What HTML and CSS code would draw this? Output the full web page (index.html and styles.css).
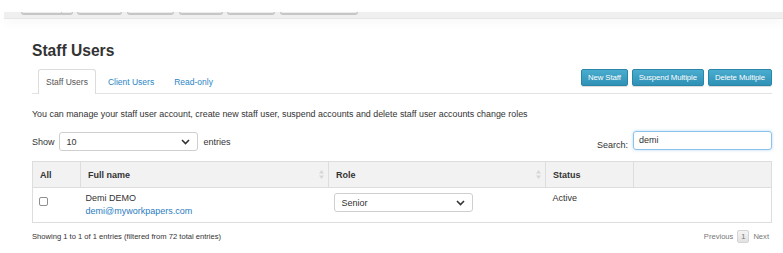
FILE: index.html
```html
<!DOCTYPE html>
<html lang="en">
<head>
    <meta charset="UTF-8">
    <meta name="viewport" content="width=device-width, initial-scale=1.0">
    <title>Staff Users</title>
    <link rel="stylesheet" href="styles.css">
</head>
<body>
    <div class="topnav">
        <div class="navbtns">
            <span class="navbtn split"><span class="navbtn-main"></span><span class="navbtn-caret"></span></span>
            <span class="navbtn w45"></span>
            <span class="navbtn w47"></span>
            <span class="navbtn w44"></span>
            <span class="navbtn w48"></span>
            <span class="navbtn w78"></span>
        </div>
    </div>

    <div class="page">
        <h1 class="title">Staff Users</h1>

        <div class="tabbar">
            <ul class="tabs">
                <li class="active">Staff Users</li>
                <li>Client Users</li>
                <li>Read-only</li>
            </ul>
            <div class="actions">
                <button class="btn">New Staff</button>
                <button class="btn">Suspend Multiple</button>
                <button class="btn">Delete Multiple</button>
            </div>
        </div>

        <p class="intro">You can manage your staff user account, create new staff user, suspend accounts and delete staff user accounts change roles</p>

        <div class="controls">
            <div class="length">
                <label>Show</label>
                <div class="select length-select">
                    <span>10</span>
                    <svg width="9" height="6" viewBox="0 0 9 6"><polyline points="1,1 4.5,4.5 8,1" fill="none" stroke="#333" stroke-width="1.6"/></svg>
                </div>
                <label>entries</label>
            </div>
            <div class="search">
                <label>Search:</label>
                <div class="search-input">demi</div>
            </div>
        </div>

        <table class="grid">
            <colgroup>
                <col class="c-all">
                <col class="c-name">
                <col class="c-role">
                <col class="c-status">
                <col>
            </colgroup>
            <thead>
                <tr>
                    <th>All</th>
                    <th>Full name<svg class="sort" width="5" height="9" viewBox="0 0 5 9"><polygon points="2.5,0 5,3.5 0,3.5" fill="#d6d6d6"/><polygon points="2.5,9 5,5.5 0,5.5" fill="#d6d6d6"/></svg></th>
                    <th>Role<svg class="sort" width="5" height="9" viewBox="0 0 5 9"><polygon points="2.5,0 5,3.5 0,3.5" fill="#d6d6d6"/><polygon points="2.5,9 5,5.5 0,5.5" fill="#d6d6d6"/></svg></th>
                    <th>Status</th>
                    <th></th>
                </tr>
            </thead>
            <tbody>
                <tr>
                    <td><span class="checkbox"></span></td>
                    <td>
                        <div class="name">Demi DEMO</div>
                        <a class="email">demi@myworkpapers.com</a>
                    </td>
                    <td class="role">
                        <div class="select role-select">
                            <span>Senior</span>
                            <svg width="9" height="6" viewBox="0 0 9 6"><polyline points="1,1 4.5,4.5 8,1" fill="none" stroke="#333" stroke-width="1.6"/></svg>
                        </div>
                    </td>
                    <td class="status">Active</td>
                    <td></td>
                </tr>
            </tbody>
        </table>

        <div class="footer">
            <span class="info">Showing 1 to 1 of 1 entries (filtered from 72 total entries)</span>
            <div class="pager">
                <span>Previous</span>
                <span class="current">1</span>
                <span>Next</span>
            </div>
        </div>
    </div>
</body>
</html>
```

FILE: styles.css
```css
body {
    font-family: "Liberation Sans", Arial, sans-serif;
    font-size: 9px;
    color: #333;
    background-color: #fff;
    margin: 0;
    padding: 0;
}
.topnav {
    margin: 12px 0 0 4px;
    height: 6px;
    background-color: #efefef;
    border-bottom: 1px solid #e6e6e6;
    box-shadow: 0 4px 10px rgba(0, 0, 0, 0.04);
}
.navbtns {
    display: flex;
    padding-left: 17px;
}
.navbtn {
    display: block;
    box-sizing: border-box;
    height: 3px;
    border: 1px solid #c6c6c6;
    border-top: 0;
    border-bottom-width: 2px;
    border-radius: 0 0 3px 3px;
    background-color: #ececec;
    margin-right: 4px;
}
.navbtn.split {
    display: flex;
    width: 52px;
    border: 0;
    background: none;
}
.navbtn-main,
.navbtn-caret {
    box-sizing: border-box;
    height: 3px;
    border: 1px solid #c6c6c6;
    border-top: 0;
    border-bottom-width: 2px;
    background-color: #ececec;
}
.navbtn-main {
    width: 41px;
    border-radius: 0 0 0 3px;
}
.navbtn-caret {
    width: 11px;
    border-left: 0;
    border-radius: 0 0 3px 0;
}
.w45 { width: 45px; margin-right: 5px; }
.w47 { width: 47px; margin-right: 5px; }
.w44 { width: 44px; }
.w48 { width: 48px; margin-right: 5px; }
.w78 { width: 78px; }
.page {
    width: 740px;
    margin-left: 32px;
}
.title {
    font-size: 15.6px;
    font-weight: bold;
    margin: 0;
    padding-top: 22px;
    height: 28px;
    line-height: 20px;
}
.tabbar {
    display: flex;
    justify-content: space-between;
    align-items: flex-start;
    border-bottom: 1px solid #e2e2e2;
    height: 24px;
}
.tabs {
    list-style-type: none;
    margin: 0;
    padding: 0 0 0 6px;
    display: flex;
}
.tabs li {
    height: 24px;
    line-height: 24px;
    padding: 0 7px;
    margin-right: 4px;
    color: #2a86c6;
    border: 1px solid transparent;
    border-bottom: 0;
    border-radius: 3px 3px 0 0;
    box-sizing: border-box;
    font-size: 8.5px;
}
.tabs li.active {
    color: #555;
    background-color: #fff;
    border-color: #dcdcdc;
    height: 25px;
}
.actions {
    display: flex;
}
.btn {
    font-family: "Liberation Sans", Arial, sans-serif;
    font-size: 7.8px;
    color: #fff;
    height: 17px;
    padding: 0 6px;
    border: 1px solid #2a86a8;
    border-radius: 2px;
    background: linear-gradient(#4aacce, #2f91b5);
    box-shadow: 0 1px 1px rgba(0, 0, 0, 0.15);
    letter-spacing: -0.1px;
    margin-left: 4px;
}
.btn:first-child {
    margin-left: 0;
}
.intro {
    margin: 14px 0 0;
    line-height: 12px;
    font-size: 8.9px;
}
.controls {
    display: flex;
    justify-content: space-between;
    align-items: center;
    margin-top: 12px;
    height: 19px;
}
.length,
.search {
    display: flex;
    align-items: center;
}
.length label:first-child {
    margin-right: 4px;
}
.length label:last-child {
    margin-left: 6px;
}
.select {
    display: flex;
    justify-content: space-between;
    align-items: center;
    box-sizing: border-box;
    border: 1px solid #cfcfcf;
    border-radius: 3px;
    background-color: #fff;
    padding: 0 7px;
}
.length-select {
    width: 139px;
    height: 19px;
}
.search {
    margin-top: 6px;
}
.search label {
    margin-right: 5px;
}
.search-input {
    box-sizing: border-box;
    width: 139px;
    height: 19px;
    line-height: 16px;
    padding: 0 5px;
    border: 1px solid #8cc1ea;
    border-radius: 3px;
    box-shadow: 0 0 3px rgba(102, 175, 233, 0.5);
    margin-top: -8px;
}
.grid {
    width: 740px;
    margin-top: 10px;
    border-collapse: collapse;
    border: 1px solid #ddd;
    table-layout: fixed;
}
.c-all { width: 48px; }
.c-name { width: 248px; }
.c-role { width: 217px; }
.c-status { width: 88px; }
.grid th {
    background-color: #f2f2f2;
    text-align: left;
    font-weight: bold;
    height: 25px;
    padding: 0 7px;
    border-left: 1px solid #ddd;
    border-bottom: 1px solid #ddd;
    position: relative;
}
.grid th:first-child {
    border-left: 0;
}
.grid td {
    vertical-align: top;
    padding: 5px 5px 4px;
    height: 25px;
}
.sort {
    position: absolute;
    right: 4px;
    top: 8px;
}
.checkbox {
    display: block;
    width: 7px;
    height: 7px;
    border: 1px solid #8f8f8f;
    border-radius: 2px;
    margin: 4px 0 0 1px;
}
.name {
    line-height: 11px;
}
.email {
    display: block;
    color: #2a7cc0;
    line-height: 14px;
}
.role-select {
    width: 139px;
    height: 19px;
}
.grid td.status {
    padding-left: 7px;
    line-height: 11px;
}
.footer {
    display: flex;
    justify-content: space-between;
    align-items: center;
    margin-top: 7px;
    font-size: 7.6px;
}
.pager {
    display: flex;
    align-items: center;
    color: #777;
    gap: 4px;
    margin-right: 3px;
}
.pager .current {
    box-sizing: border-box;
    width: 12px;
    height: 13px;
    line-height: 11px;
    text-align: center;
    border: 1px solid #d4d4d4;
    border-radius: 2px;
    background: linear-gradient(#f4f4f4, #e2e2e2);
}
```
